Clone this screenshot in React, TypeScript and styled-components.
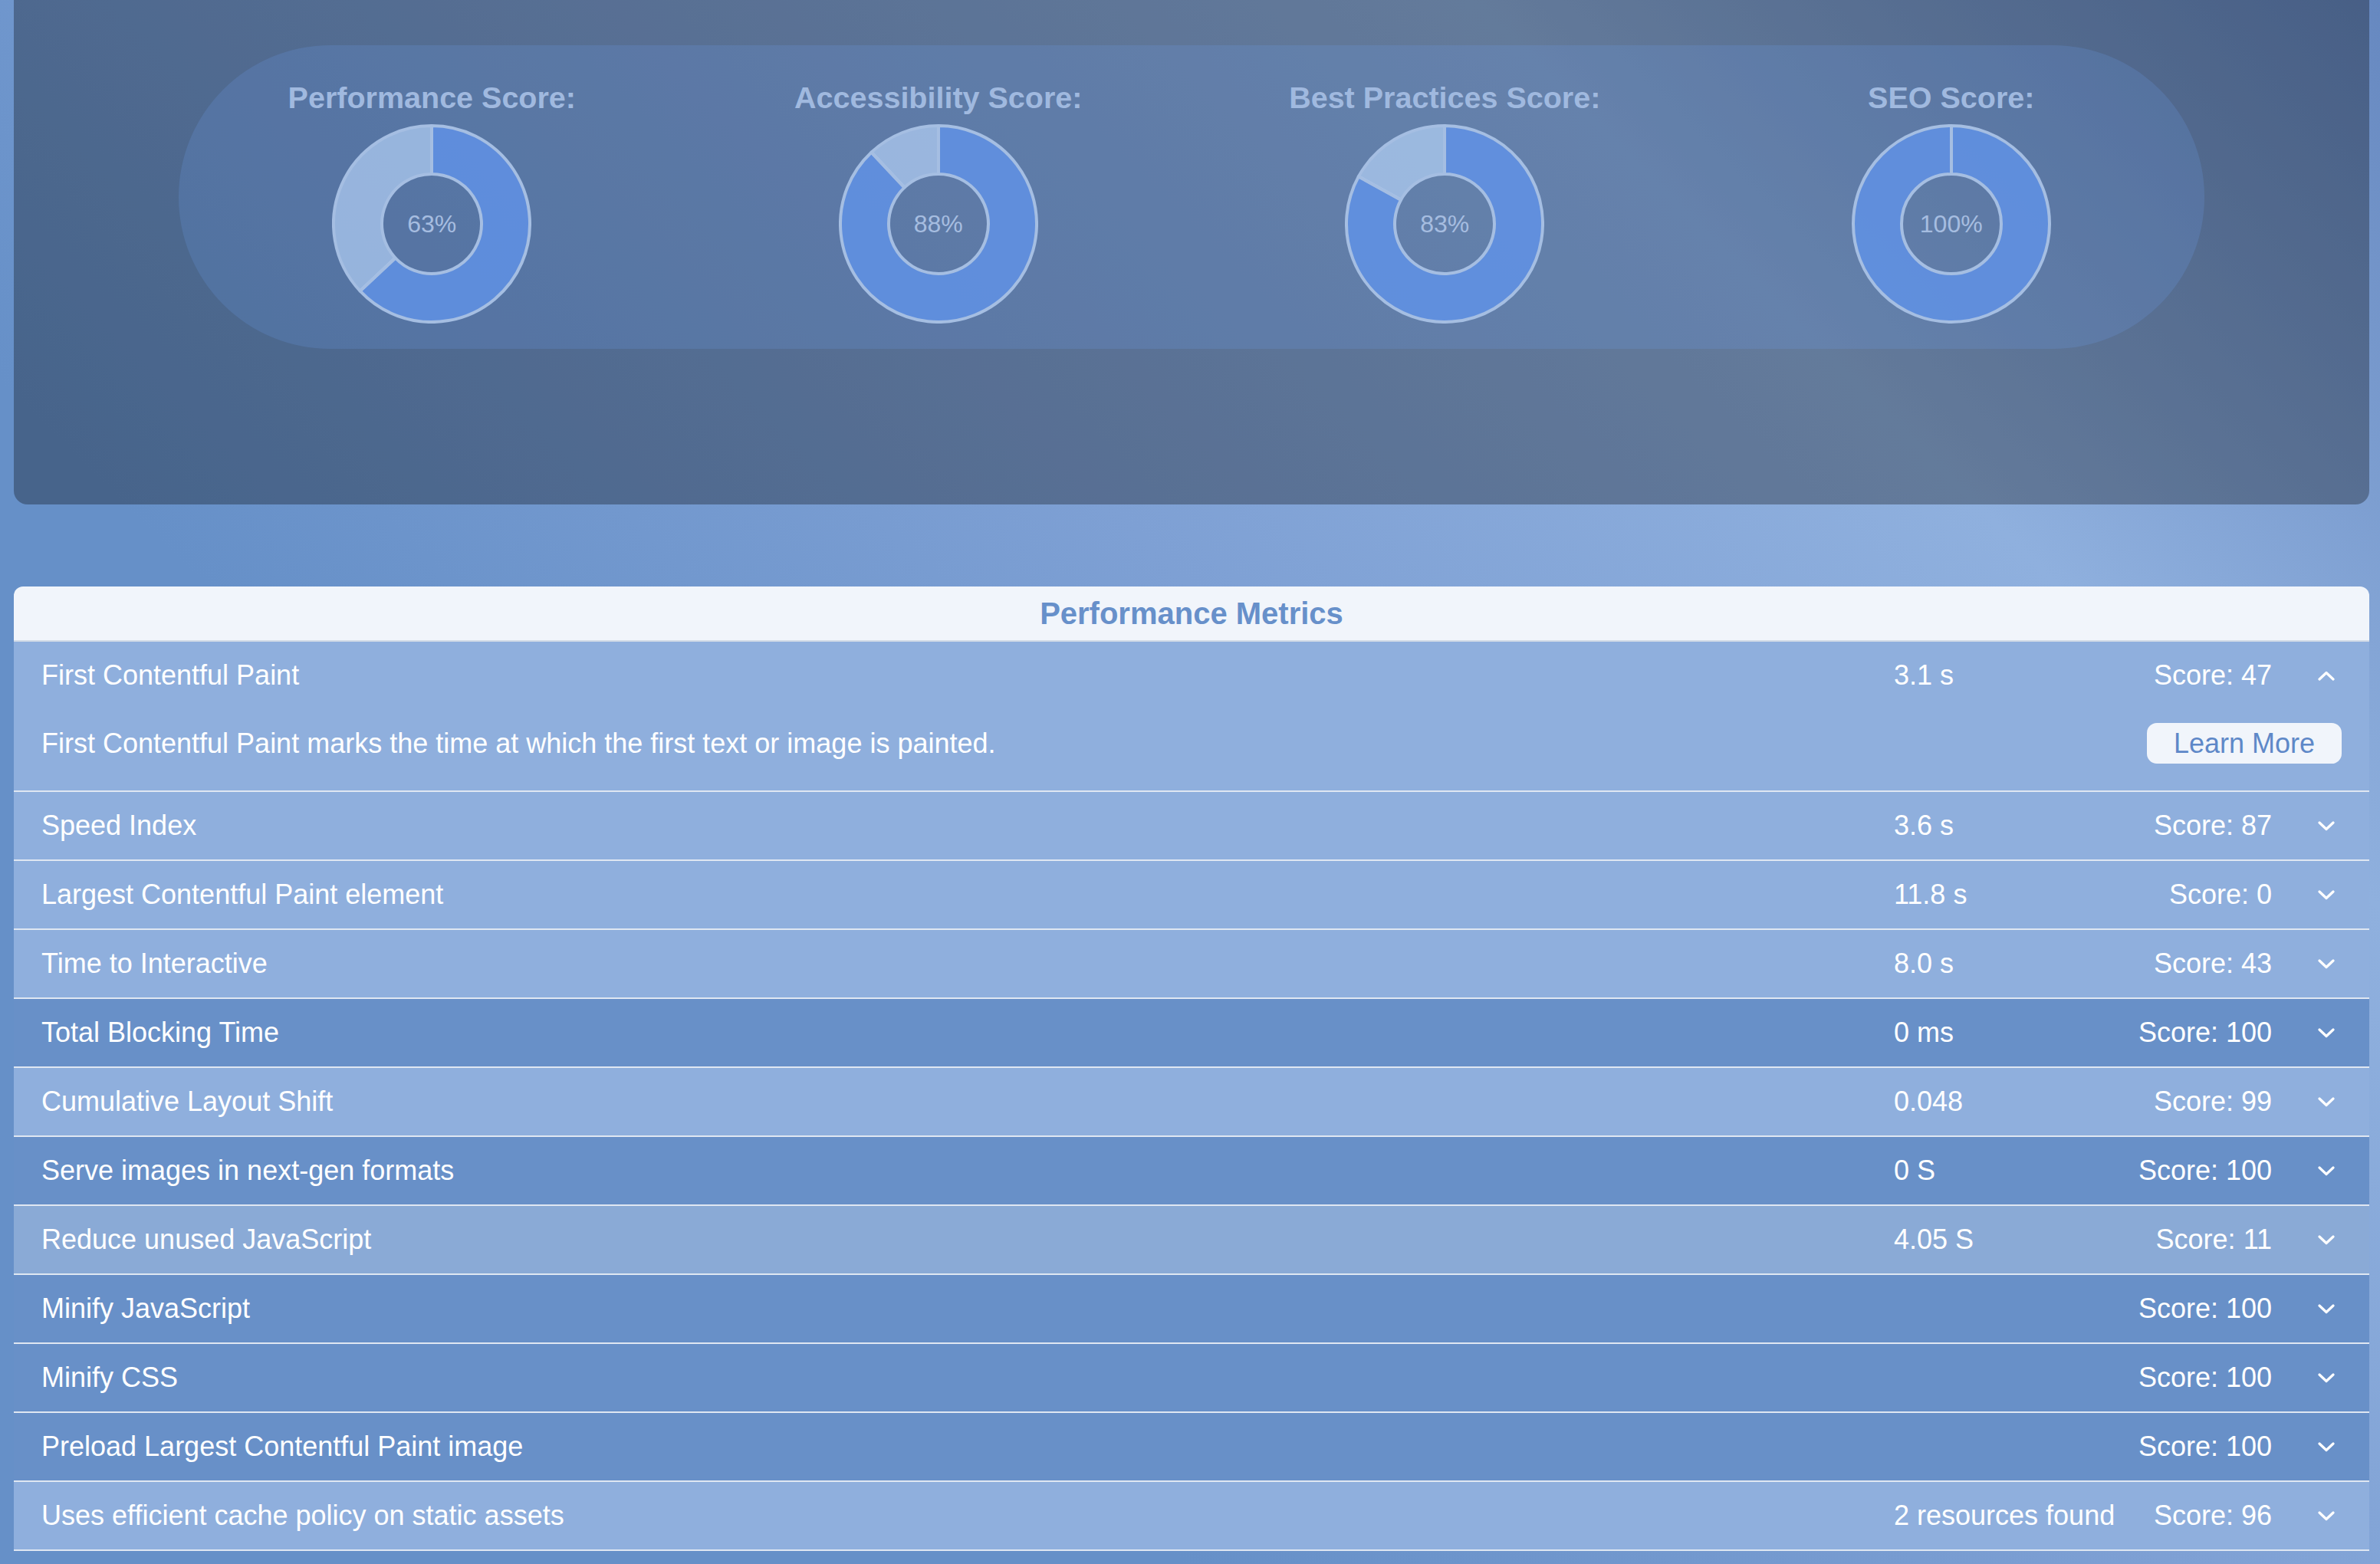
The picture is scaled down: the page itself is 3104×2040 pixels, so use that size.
import React from "react";
import styled, { createGlobalStyle } from "styled-components";

const GlobalStyle = createGlobalStyle`
  html, body { margin: 0; padding: 0; }
  body {
    min-height: 100vh;
    background: linear-gradient(45deg, #6690c8 0%, #6690c8 30%, #7ea0d4 55%, #8fb0de 77%, #6688c0 100%) fixed;
    font-family: "Liberation Sans", Arial, sans-serif;
  }
  * { box-sizing: border-box; }
`;

const Page = styled.div`
  padding: 0 14px 40px 18px;
`;

const TopPanel = styled.section`
  height: 658px;
  padding-top: 59px;
  background: rgba(0, 0, 0, 0.3);
  border-radius: 0 0 18px 18px;
`;

const ScorePill = styled.div`
  width: 86%;
  height: 396px;
  margin: 0 auto;
  border-radius: 198px;
  background: rgba(110, 160, 240, 0.2);
  display: grid;
  grid-template-columns: repeat(4, 1fr);
  padding-top: 45px;
`;

const ScoreCard = styled.div`
  display: flex;
  flex-direction: column;
  align-items: center;
  gap: 12px;
`;

const ScoreTitle = styled.h2`
  margin: 0;
  font-size: 39.5px;
  line-height: 46px;
  font-weight: 700;
  color: #a0b9df;
`;

const ChartWrap = styled.div`
  display: grid;
  width: 260px;
  height: 260px;
  & > * {
    grid-area: 1 / 1;
  }
`;

const ChartLabel = styled.span`
  align-self: center;
  justify-self: center;
  font-size: 32px;
  color: #a6bde0;
`;

const Table = styled.section`
  margin-top: 107px;
`;

const TableHeader = styled.h3`
  margin: 0;
  height: 70px;
  display: flex;
  align-items: center;
  justify-content: center;
  background: #f1f5fb;
  border-radius: 12px 12px 0 0;
  border-bottom: 2px solid #d3dbe6;
  box-sizing: content-box;
  font-size: 40px;
  font-weight: 700;
  color: #6790ca;
`;

const Row = styled.div<{ $tone: "light" | "dark" | "hover" }>`
  border-bottom: 2px solid #dfe7f2;
  background: ${(p) =>
    p.$tone === "dark" ? "#6890c8" : p.$tone === "hover" ? "#8aaad6" : "#8fafdd"};
  color: #ffffff;
  font-size: 36px;
  line-height: 1.15;
`;

const RowHead = styled.div`
  height: 88px;
  padding: 0 36px;
  display: grid;
  grid-template-columns: 1fr 310px 183px 91px;
  align-items: center;
`;

const MetricName = styled.span``;

const MetricValue = styled.span`
  justify-self: start;
`;

const MetricScore = styled.span`
  justify-self: end;
`;

const ToggleIcon = styled.span`
  justify-self: end;
  width: 40px;
  height: 40px;
  display: flex;
  align-items: center;
  justify-content: center;
`;

const Detail = styled.div`
  display: flex;
  align-items: center;
  justify-content: space-between;
  padding: 18px 36px 35px;
`;

const LearnMore = styled.button`
  height: 53px;
  padding: 0 35px;
  border: none;
  border-radius: 13px;
  background: #f1f5fb;
  color: #5e88c8;
  font-family: "Liberation Sans", Arial, sans-serif;
  font-size: 36px;
  cursor: pointer;
`;

const C = 130;
const RO = 128;
const RI = 65;

function polar(r: number, a: number): string {
  return `${(C + r * Math.sin(a)).toFixed(3)} ${(C - r * Math.cos(a)).toFixed(3)}`;
}

function sectorPath(a0: number, a1: number): string {
  if (a1 - a0 >= Math.PI * 2 - 1e-6) {
    return [
      `M ${polar(RO, 0)}`,
      `A ${RO} ${RO} 0 1 1 ${polar(RO, Math.PI)}`,
      `A ${RO} ${RO} 0 1 1 ${polar(RO, 0)}`,
      `L ${polar(RI, 0)}`,
      `A ${RI} ${RI} 0 1 0 ${polar(RI, Math.PI)}`,
      `A ${RI} ${RI} 0 1 0 ${polar(RI, 0)}`,
      "Z",
    ].join(" ");
  }
  const large = a1 - a0 > Math.PI ? 1 : 0;
  return [
    `M ${polar(RO, a0)}`,
    `A ${RO} ${RO} 0 ${large} 1 ${polar(RO, a1)}`,
    `L ${polar(RI, a1)}`,
    `A ${RI} ${RI} 0 ${large} 0 ${polar(RI, a0)}`,
    "Z",
  ].join(" ");
}

const Donut: React.FC<{ value: number }> = ({ value }) => {
  const split = (value / 100) * Math.PI * 2;
  return (
    <ChartWrap>
      <svg width="260" height="260" viewBox="0 0 260 260">
        <path
          d={sectorPath(0, split)}
          fill="rgba(96,146,232,0.82)"
          stroke="#a5bee2"
          strokeWidth={4}
          strokeLinejoin="round"
        />
        {value < 100 && (
          <path
            d={sectorPath(split, Math.PI * 2)}
            fill="rgba(186,215,252,0.65)"
            stroke="#a5bee2"
            strokeWidth={4}
            strokeLinejoin="round"
          />
        )}
      </svg>
      <ChartLabel>{value}%</ChartLabel>
    </ChartWrap>
  );
};

const Chevron: React.FC<{ up?: boolean }> = ({ up }) => (
  <svg width="22" height="13" viewBox="0 0 22 13" fill="none">
    <polyline
      points={up ? "2,11 11,2.5 20,11" : "2,2 11,10.5 20,2"}
      stroke="#ffffff"
      strokeWidth={3.2}
      strokeLinecap="round"
      strokeLinejoin="round"
    />
  </svg>
);

const scores = [
  { title: "Performance Score:", value: 63 },
  { title: "Accessibility Score:", value: 88 },
  { title: "Best Practices Score:", value: 83 },
  { title: "SEO Score:", value: 100 },
];

type Metric = {
  name: string;
  value: string;
  score: number;
  hover?: boolean;
  description?: string;
};

const metrics: Metric[] = [
  {
    name: "First Contentful Paint",
    value: "3.1 s",
    score: 47,
    description:
      "First Contentful Paint marks the time at which the first text or image is painted.",
  },
  { name: "Speed Index", value: "3.6 s", score: 87 },
  { name: "Largest Contentful Paint element", value: "11.8 s", score: 0 },
  { name: "Time to Interactive", value: "8.0 s", score: 43 },
  { name: "Total Blocking Time", value: "0 ms", score: 100 },
  { name: "Cumulative Layout Shift", value: "0.048", score: 99 },
  { name: "Serve images in next-gen formats", value: "0 S", score: 100 },
  { name: "Reduce unused JavaScript", value: "4.05 S", score: 11, hover: true },
  { name: "Minify JavaScript", value: "", score: 100 },
  { name: "Minify CSS", value: "", score: 100 },
  { name: "Preload Largest Contentful Paint image", value: "", score: 100 },
  {
    name: "Uses efficient cache policy on static assets",
    value: "2 resources found",
    score: 96,
  },
];

export default function App() {
  return (
    <>
      <GlobalStyle />
      <Page>
        <TopPanel>
          <ScorePill>
            {scores.map((s) => (
              <ScoreCard key={s.title}>
                <ScoreTitle>{s.title}</ScoreTitle>
                <Donut value={s.value} />
              </ScoreCard>
            ))}
          </ScorePill>
        </TopPanel>
        <Table>
          <TableHeader>Performance Metrics</TableHeader>
          {metrics.map((m) => {
            const tone = m.score === 100 ? "dark" : m.hover ? "hover" : "light";
            return (
              <Row key={m.name} $tone={tone}>
                <RowHead>
                  <MetricName>{m.name}</MetricName>
                  <MetricValue>{m.value}</MetricValue>
                  <MetricScore>Score: {m.score}</MetricScore>
                  <ToggleIcon>
                    <Chevron up={!!m.description} />
                  </ToggleIcon>
                </RowHead>
                {m.description && (
                  <Detail>
                    <span>{m.description}</span>
                    <LearnMore>Learn More</LearnMore>
                  </Detail>
                )}
              </Row>
            );
          })}
        </Table>
      </Page>
    </>
  );
}
